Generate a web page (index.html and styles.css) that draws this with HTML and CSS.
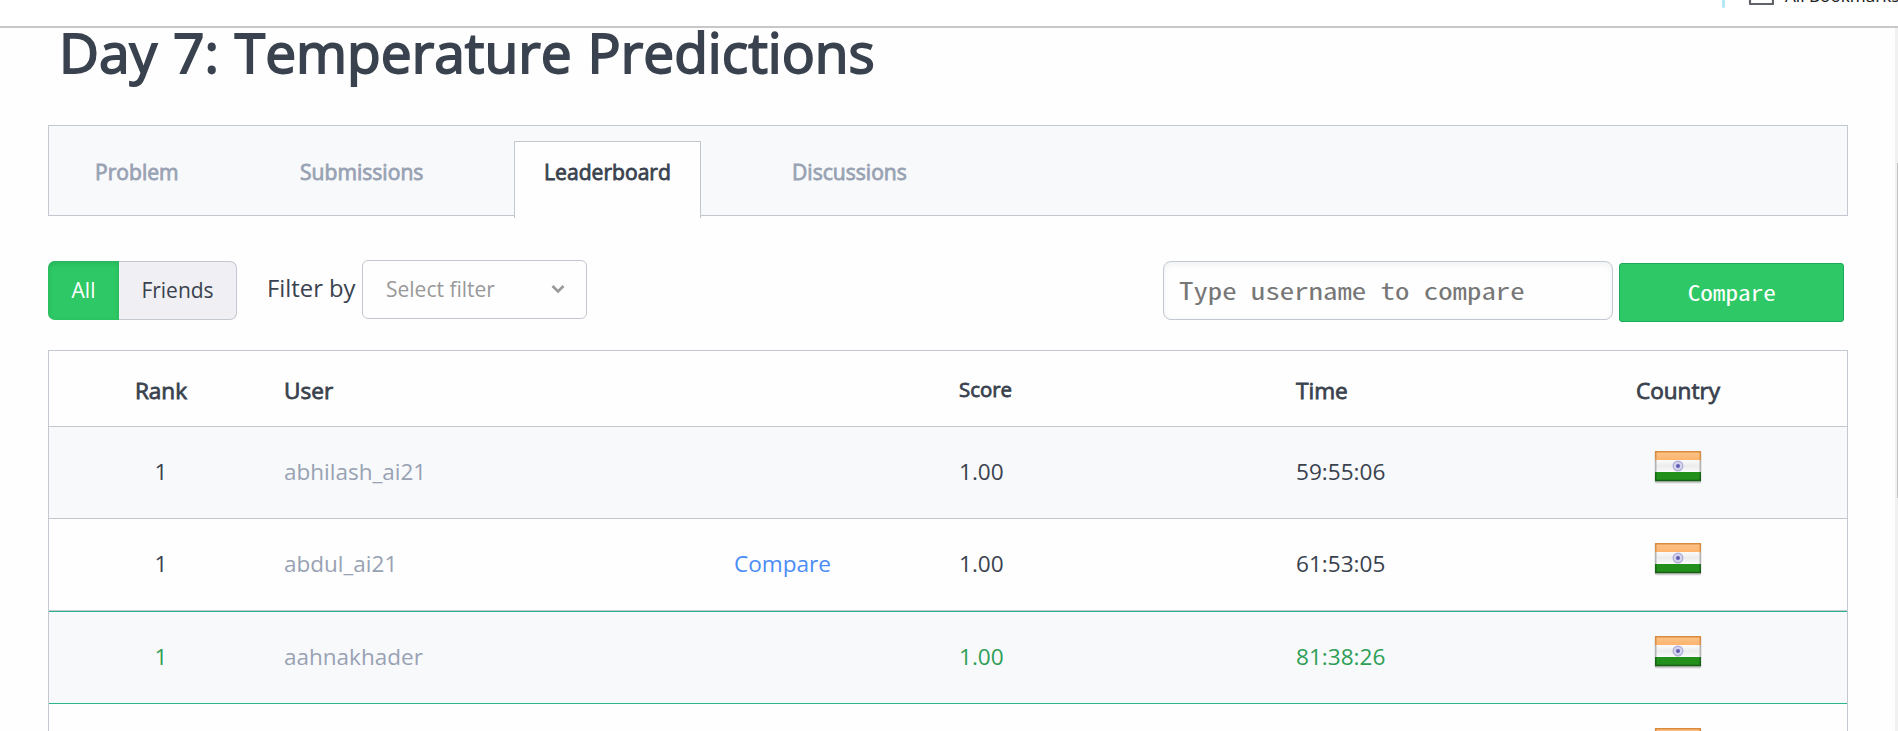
FILE: index.html
```html
<!DOCTYPE html>
<html lang="en">
<head>
<meta charset="utf-8">
<title>Day 7: Temperature Predictions</title>
<link rel="stylesheet" href="styles.css">
</head>
<body>
<svg class="defs" width="0" height="0" aria-hidden="true">
  <defs>
    <linearGradient id="saffron" x1="0" y1="0" x2="0" y2="1"><stop offset="0" stop-color="#fbc48c"/><stop offset="1" stop-color="#fdb46c"/></linearGradient>
    <linearGradient id="white" x1="0" y1="0" x2="0" y2="1"><stop offset="0" stop-color="#fbfbfb"/><stop offset=".5" stop-color="#ececec"/><stop offset="1" stop-color="#fbfbfb"/></linearGradient>
    <linearGradient id="edge" x1="0" y1="0" x2="0" y2="1"><stop offset="0" stop-color="#d98a3c"/><stop offset=".3" stop-color="#dc9450"/><stop offset=".31" stop-color="#b4b4b4"/><stop offset=".69" stop-color="#b4b4b4"/><stop offset=".7" stop-color="#1c6e18"/><stop offset="1" stop-color="#175e14"/></linearGradient>
    <symbol id="flag" viewBox="0 0 48 34">
      <rect x="0.500" y="1" width="47" height="31.500" rx="1.500" fill="#000" opacity=".14"/>
      <rect x="1" y="2" width="46" height="31.500" rx="1.500" fill="#000" opacity=".12"/>
      <rect x="1" y="1" width="46" height="9" fill="url(#saffron)"/>
      <rect x="1" y="10" width="46" height="12" fill="url(#white)"/>
      <rect x="1" y="22" width="46" height="9" fill="#22901a"/>
      <rect x="1.750" y="1.750" width="44.500" height="28.700" fill="none" stroke="url(#edge)" stroke-width="1.500"/>
      <circle cx="24" cy="16" r="4.800" fill="#d5d4ec" stroke="#b3b1dc" stroke-width="1.400"/>
      <circle cx="24" cy="16" r="2" fill="#5f5bb4"/>
    </symbol>
  </defs>
</svg>
<div class="browser">
  <span class="divider"></span>
  <svg class="folder" width="26" height="20" viewBox="0 0 26 20"><path d="M2 3.500h8l2.500 2.500h12.500v12h-23z" fill="none" stroke="#5f6368" stroke-width="2.200" stroke-linejoin="round"/></svg>
  <span class="bookmarks">All Bookmarks</span>
</div>
<div class="viewport">
  <main class="page">
    <h1 class="title">Day 7: Temperature Predictions</h1>
    <nav class="tabs">
      <a class="tab t1">Problem</a>
      <a class="tab t2">Submissions</a>
      <a class="tab active">Leaderboard</a>
      <a class="tab t4">Discussions</a>
    </nav>
    <section class="controls">
      <div class="toggle"><span class="all">All</span><span class="friends">Friends</span></div>
      <span class="filter-label">Filter by</span>
      <div class="select"><span>Select filter</span><svg width="16" height="12" viewBox="0 0 16 12"><path d="M2.500 3l5.500 5.500L13.500 3" fill="none" stroke="#999" stroke-width="2.600"/></svg></div>
      <div class="input"><span class="wide">Type username to compare</span></div>
      <div class="button"><span class="wide">Compare</span></div>
    </section>
    <section class="board">
      <div class="row head"><span class="rank">Rank</span><span>User</span><span></span><span class="score">Score</span><span>Time</span><span class="country">Country</span></div>
      <div class="row odd"><span class="rank">1</span><span class="user">abhilash_ai21</span><span></span><span>1.00</span><span>59:55:06</span><svg class="flag"><use href="#flag"/></svg></div>
      <div class="row"><span class="rank">1</span><span class="user">abdul_ai21</span><span class="link">Compare</span><span>1.00</span><span>61:53:05</span><svg class="flag"><use href="#flag"/></svg></div>
      <div class="row odd self"><span class="rank">1</span><span class="user">aahnakhader</span><span></span><span>1.00</span><span>81:38:26</span><svg class="flag"><use href="#flag"/></svg></div>
      <div class="row"><span class="rank"></span><span></span><span></span><span></span><span></span><svg class="flag"><use href="#flag"/></svg></div>
    </section>
  </main>
  <div class="scrollbar"><div class="thumb"></div></div>
</div>
</body>
</html>
```
FILE: styles.css
```css
* { box-sizing: border-box; }
body {
  margin: 0;
  height: 731px;
  overflow: hidden;
  background: #fefefe;
  color: #39424e;
  font: 22.600px/30px "Open Sans", "Noto Sans", sans-serif;
  display: flex;
  flex-direction: column;
}
span, a, h1, .input, .button { white-space: nowrap; }
.defs { position: absolute; }
.browser {
  flex: none;
  display: flex;
  height: 28px;
  overflow: hidden;
  border-bottom: 2px solid #c8c8c8;
  background: #fff;
}
.divider { flex: none; width: 3px; height: 8px; margin-left: 1722px; background: #b5e8f6; border-radius: 0 0 2px 2px; }
.folder { flex: none; margin: -14px 0 0 23px; }
.bookmarks { margin: -17px 0 0 11px; font-family: "Noto Sans", sans-serif; font-size: 17px; line-height: 26px; color: #202124; }
.viewport { flex: 1; display: flex; min-height: 0; overflow: hidden; }
.page { width: 1895px; padding-left: 48px; flex: none; }
.scrollbar { width: 3px; background: #f1f1f1; padding-top: 135px; }
.thumb { width: 1px; margin-left: 2px; height: 335px; background: #c1c1c1; }
.title {
  margin: 0 0 0 11px;
  height: 97px;
  font-size: 55.100px;
  line-height: 48px;
  font-weight: 400;
  word-spacing: 1.500px;
  -webkit-text-stroke: 1.8px #39424e;
}
.tabs {
  display: flex;
  width: 1800px;
  height: 91px;
  border: 1px solid #c2c7d0;
  background: #f8f9fb;
  font-size: 21.100px;
  -webkit-text-stroke: .8px currentColor;
}
.tab { color: #98a2b3; padding-top: 31px; }
.t1 { margin-left: 46px; width: 205px; }
.t2 { width: 214px; }
.active {
  width: 187px;
  height: 77px;
  margin-top: 15px;
  padding-top: 15px;
  text-align: center;
  color: #39424e;
  background: #fefefe;
  border: 1px solid #c2c7d0;
  border-bottom: 0;
}
.t4 { margin-left: 91px; }
.controls { display: flex; height: 134px; padding-top: 45px; }
.toggle {
  display: flex;
  width: 189px;
  height: 59px;
  font-size: 21px;
  line-height: 58px;
  text-align: center;
}
.all { width: 71px; color: #fff; background: #2ec866; border-radius: 7px 0 0 7px; box-shadow: inset 0 2px 5px #27b259; }
.friends { width: 118px; background: #f0eff4; border: 1px solid #c2c7d0; border-left: 0; border-radius: 0 7px 7px 0; line-height: 56px; }
.filter-label { width: 94px; margin: 12px 0 0 30px; font-size: 23.800px; }
.select {
  display: flex;
  align-items: center;
  justify-content: space-between;
  width: 225px;
  height: 59px;
  margin: -1px 0 0 1px;
  padding: 0 20px 1px 23px;
  border: 1px solid #c2c7d0;
  border-radius: 6px;
  color: #999;
  font-size: 21px;
}
.input {
  width: 450px;
  height: 59px;
  margin-left: 576px;
  padding-left: 15px;
  border: 1px solid #c2c7d0;
  border-radius: 8px;
  box-shadow: inset 0 2px 6px #eeeff2;
  color: #777;
  font: 24px/55px "Noto Sans Mono CJK SC", "DejaVu Sans Mono", monospace;
}
/* Half-width Latin glyphs widened to a regular monospace advance */
.wide { display: inline-block; transform: scaleX(1.2); transform-origin: left; }
.button .wide { transform-origin: center; }
.button {
  width: 225px;
  height: 59px;
  margin: 2px 0 0 6px;
  border: 1px solid #1ba95f;
  border-radius: 3px;
  background: #2ec866;
  color: #fff;
  text-align: center;
  font: 21px/57px "Noto Sans Mono CJK SC", "DejaVu Sans Mono", monospace;
}
.board { width: 1800px; border: 1px solid #c2c7d0; border-bottom: 0; }
.row {
  display: grid;
  grid-template-columns: 235px 450px 225px 337px 318px 140px;
  height: 92px;
  padding-top: 30px;
  border-bottom: 1px solid #c2c7d0;
}
.head { height: 76px; padding-top: 25px; -webkit-text-stroke: .8px currentColor; }
.rank { text-align: center; width: 224px; }
.score { font-size: 20.400px; margin-top: -2px; }
.country { text-align: center; width: 128px; }
.odd { background: #f8f9fb; }
.user { color: #98a2b3; font-size: 22.500px; }
.link { color: #4a8cf7; }
.self { height: 93px; border-top: 1px solid #2bb58c; border-bottom-color: #2bb58c; color: #2e9f57; }
.flag { width: 48px; height: 34px; margin: -7px 0 0 40px; }
```
